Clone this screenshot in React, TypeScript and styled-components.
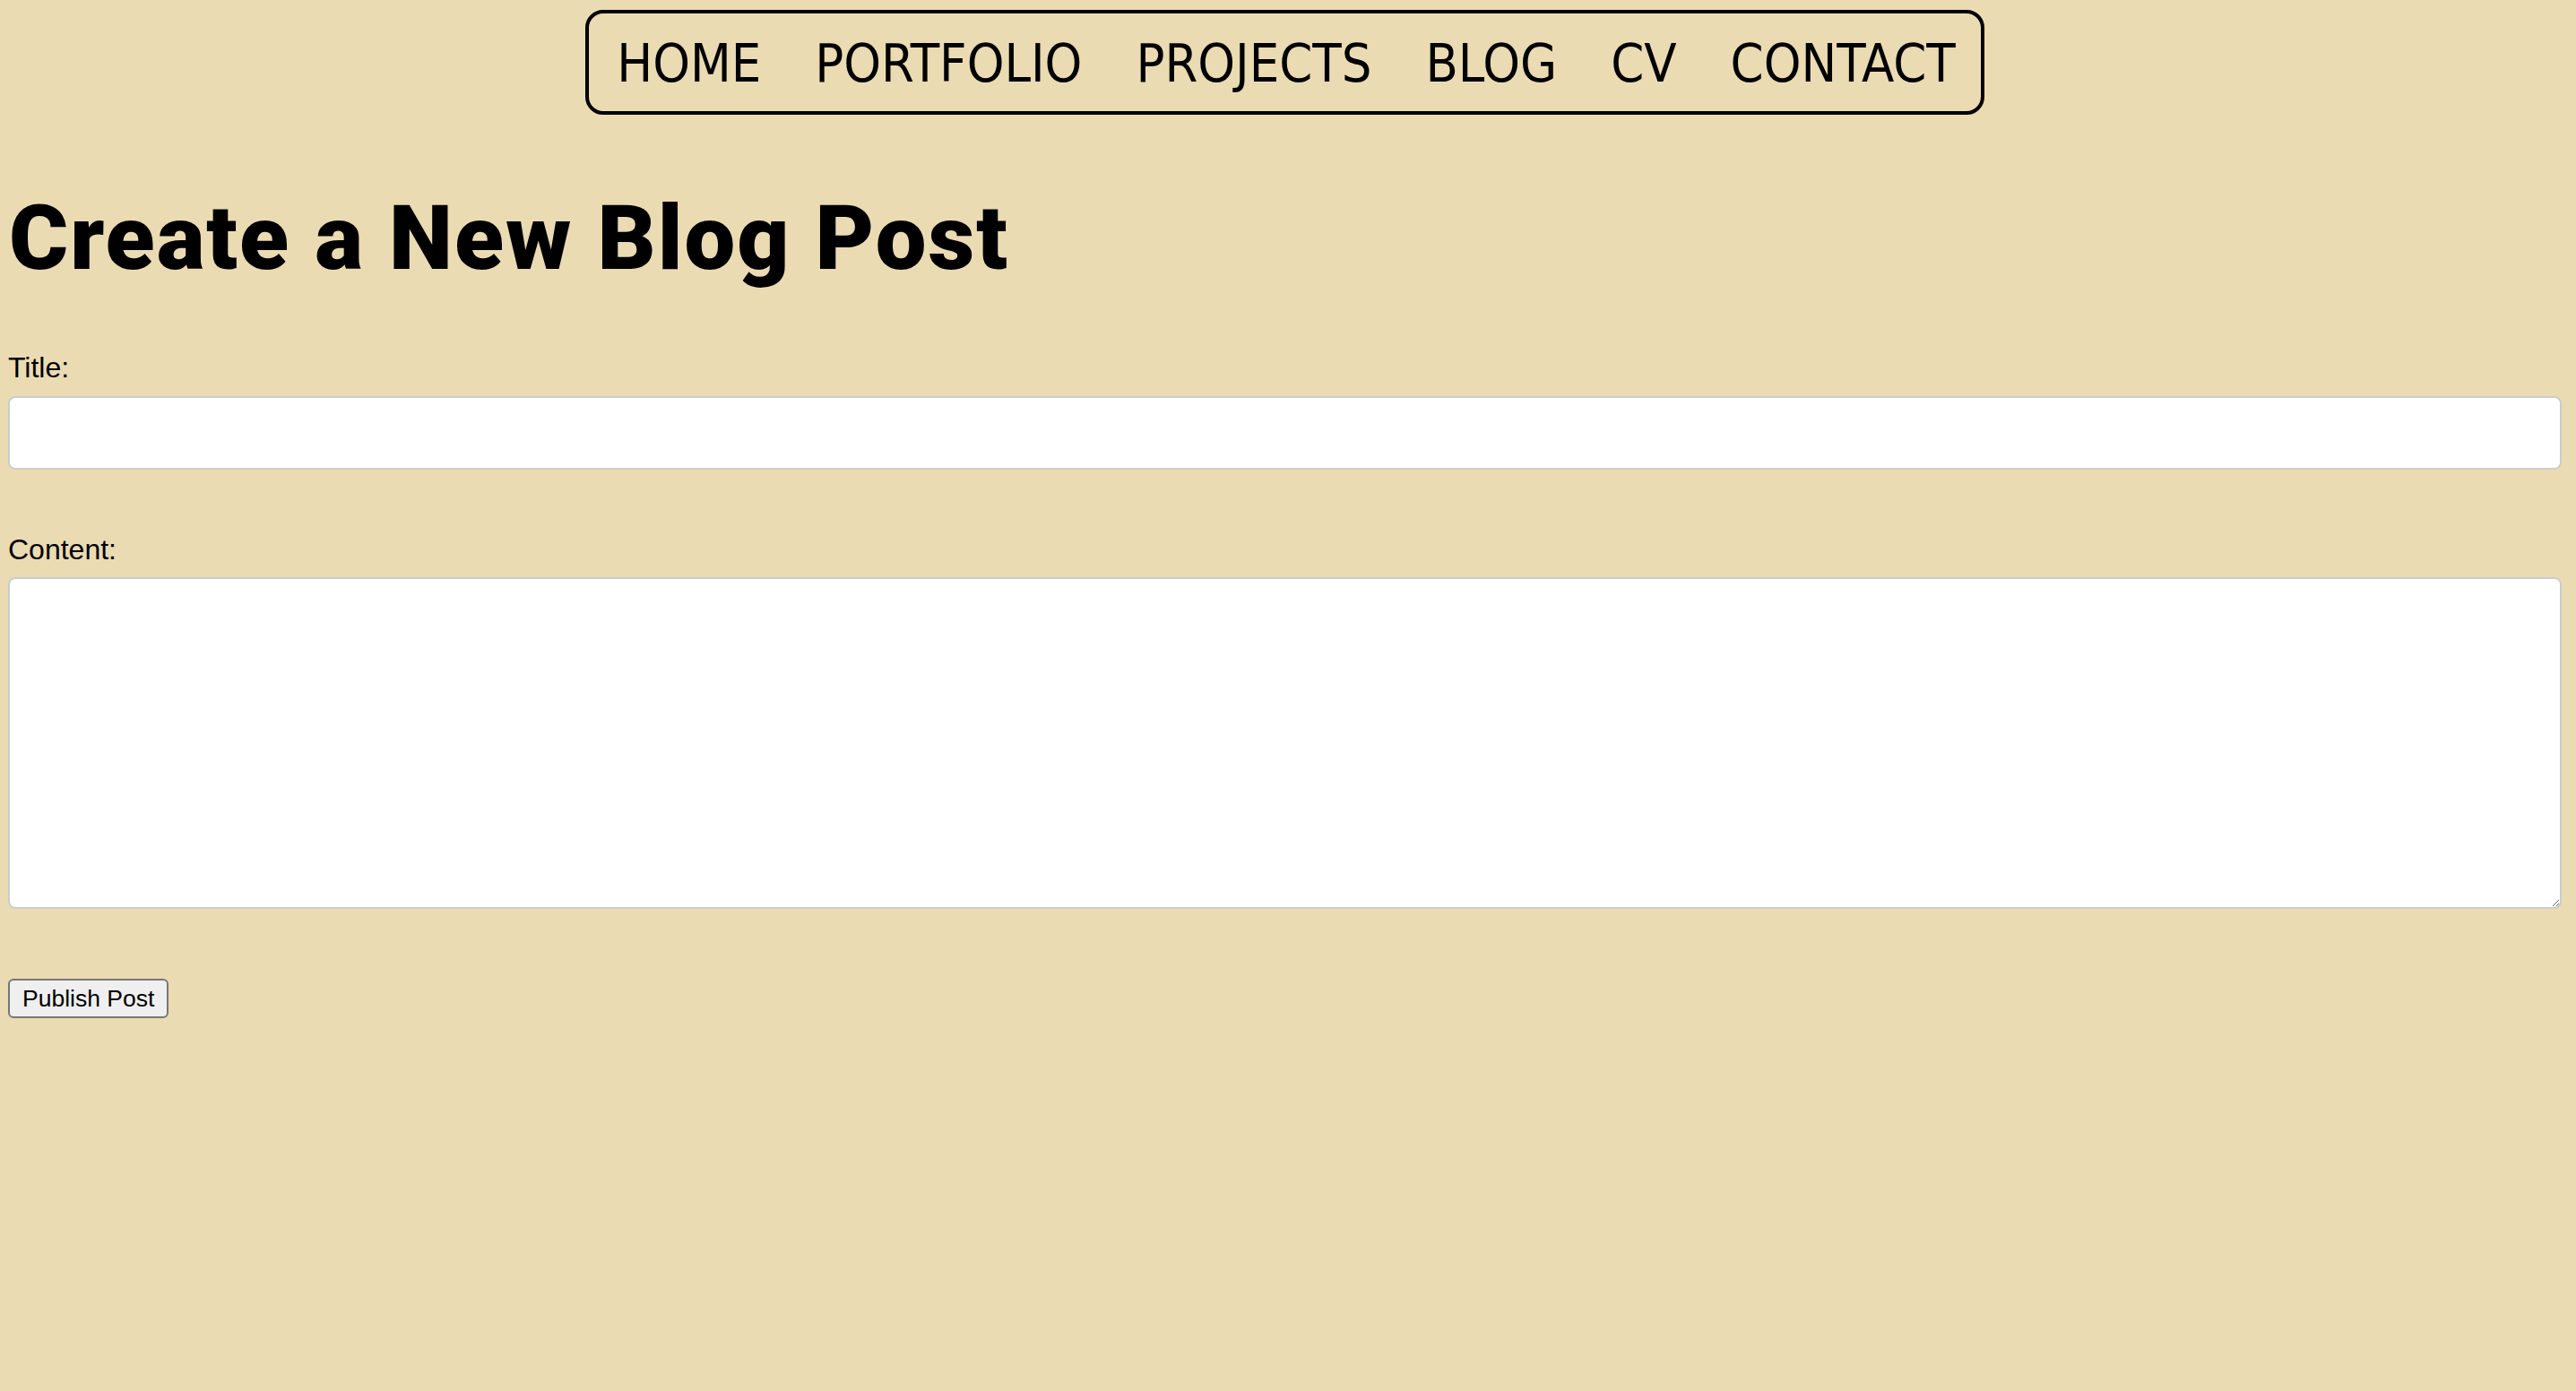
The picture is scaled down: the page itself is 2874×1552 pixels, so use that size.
import React, { useState } from 'react';
import styled, { createGlobalStyle } from 'styled-components';

const GlobalStyle = createGlobalStyle`
  html, body {
    margin: 0;
    padding: 0;
    background: #ebdbb2;
  }

  body {
    font-family: "Liberation Sans", Arial, sans-serif;
    color: #000;
  }
`;

const Page = styled.div`
  display: flex;
  flex-direction: column;
  padding: 11px 16px 0 9px;
  min-height: 1552px;
  box-sizing: border-box;
`;

const NavBar = styled.nav`
  align-self: center;
  display: flex;
  gap: 60px;
  padding: 26px 28px 24px 31px;
  border: 4px solid #000;
  border-radius: 20px;
`;

const NavLink = styled.a`
  font-family: "DejaVu Sans Condensed", "DejaVu Sans", sans-serif;
  font-stretch: condensed;
  font-size: 59px;
  line-height: 1;
  color: #000;
  text-decoration: none;
  cursor: pointer;
`;

const Heading = styled.h1`
  margin: 87px 0 0 1px;
  font-family: "Roboto", "Liberation Sans", sans-serif;
  font-weight: 900;
  font-size: 101px;
  letter-spacing: 2px;
  line-height: 1;
`;

const Form = styled.form`
  display: flex;
  flex-direction: column;
  align-items: flex-start;
`;

const Label = styled.label<{ $top: number }>`
  margin-top: ${(p) => p.$top}px;
  font-size: 32px;
  line-height: 1;
`;

const TextInput = styled.input`
  box-sizing: border-box;
  width: 100%;
  height: 82px;
  margin-top: 16px;
  padding: 0 16px;
  border: 2px solid #cccccc;
  border-radius: 8px;
  background: #fff;
  font-family: "Liberation Sans", Arial, sans-serif;
  font-size: 32px;
  outline: none;
`;

const TextArea = styled.textarea`
  box-sizing: border-box;
  width: 100%;
  height: 370px;
  margin-top: 15px;
  padding: 16px;
  border: 2px solid #cccccc;
  border-radius: 8px;
  background: #fff;
  font-family: "Liberation Sans", Arial, sans-serif;
  font-size: 32px;
  outline: none;
`;

const SubmitButton = styled.button`
  margin-top: 78px;
  height: 44px;
  padding: 0 14px;
  border: 2px solid #767676;
  border-radius: 6px;
  background: #efefef;
  font-family: "Liberation Sans", Arial, sans-serif;
  font-size: 26.5px;
  line-height: 1;
  color: #000;
  cursor: pointer;
`;

const links = ['HOME', 'PORTFOLIO', 'PROJECTS', 'BLOG', 'CV', 'CONTACT'];

const App: React.FC = () => {
  const [title, setTitle] = useState('');
  const [content, setContent] = useState('');

  const handleSubmit = (e: React.FormEvent) => {
    e.preventDefault();
  };

  return (
    <>
      <GlobalStyle />
      <Page>
        <NavBar>
          {links.map((link) => (
            <NavLink key={link}>{link}</NavLink>
          ))}
        </NavBar>

        <Heading>Create a New Blog Post</Heading>

        <Form onSubmit={handleSubmit}>
          <Label $top={78} htmlFor="title">Title:</Label>
          <TextInput
            id="title"
            value={title}
            onChange={(e) => setTitle(e.target.value)}
          />

          <Label $top={73} htmlFor="content">Content:</Label>
          <TextArea
            id="content"
            value={content}
            onChange={(e) => setContent(e.target.value)}
          />

          <SubmitButton type="submit">Publish Post</SubmitButton>
        </Form>
      </Page>
    </>
  );
};

export default App;
